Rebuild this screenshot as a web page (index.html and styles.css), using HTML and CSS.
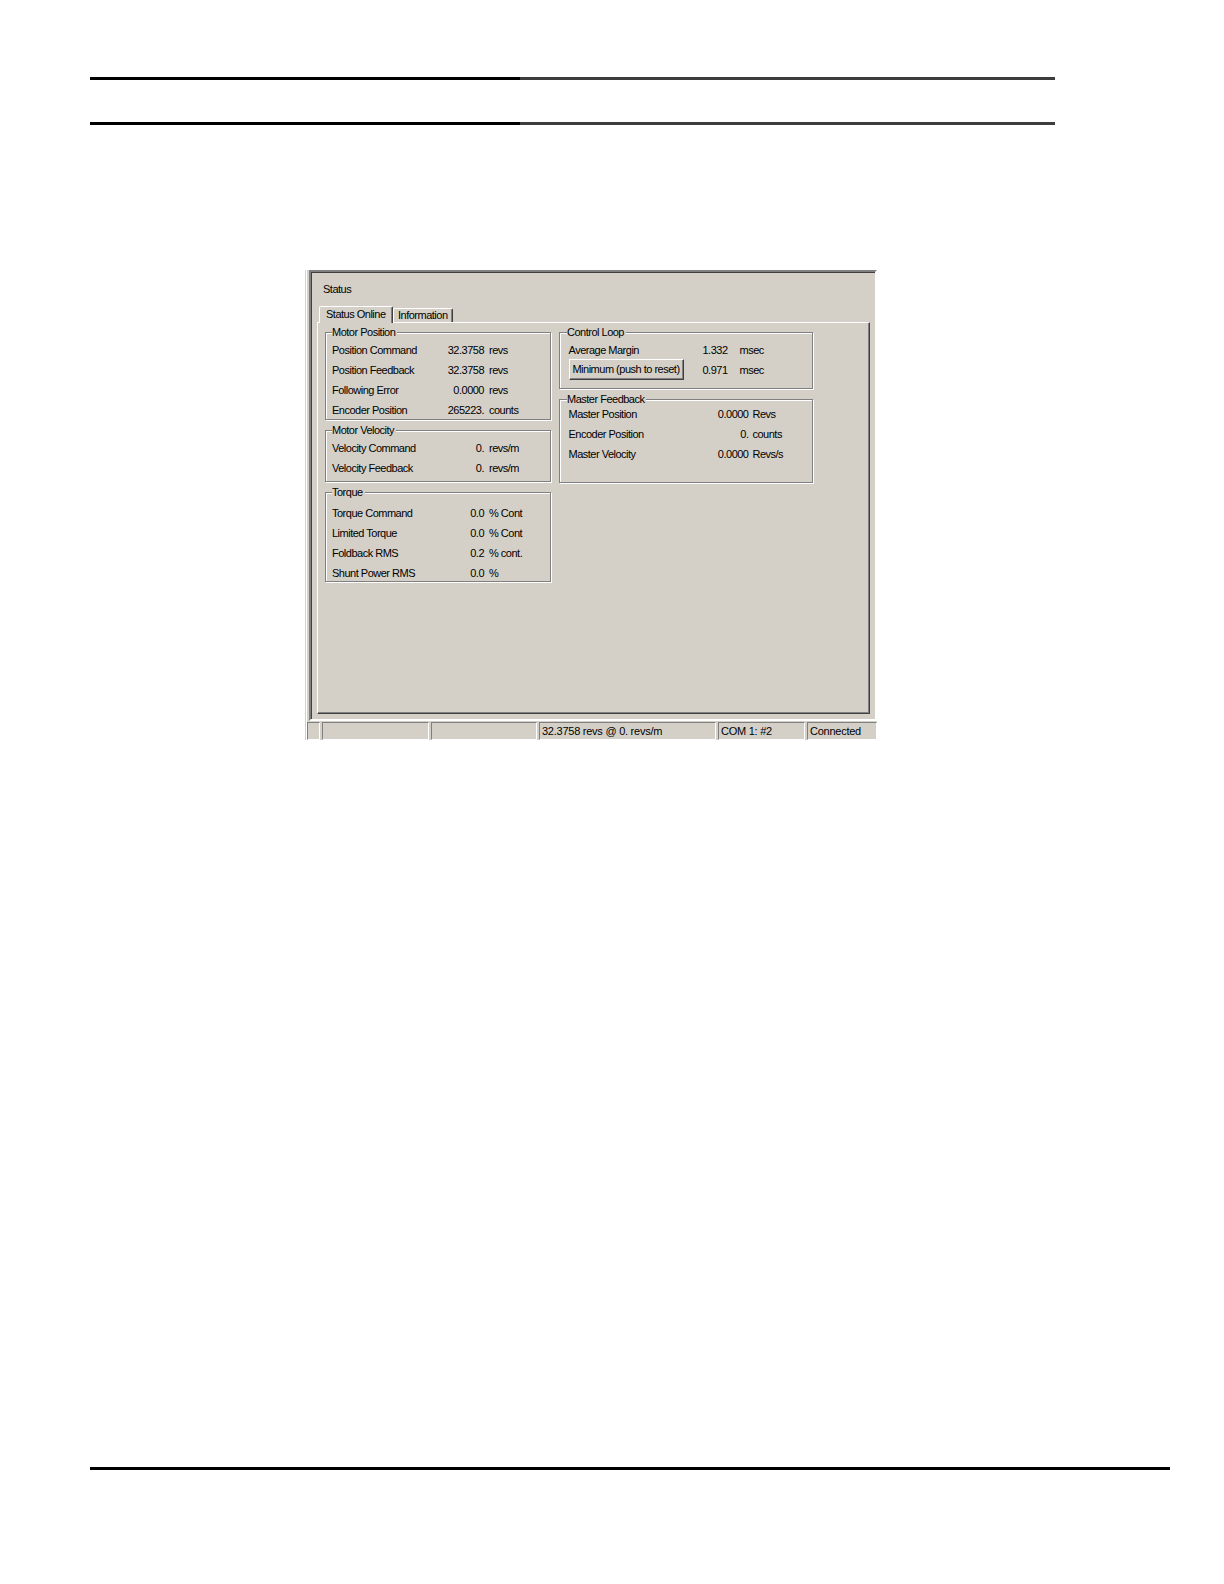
FILE: index.html
```html
<!DOCTYPE html>
<html>
<head>
<meta charset="utf-8">
<title>Status</title>
<link rel="stylesheet" href="styles.css">
</head>
<body>
<div class="page">
  <div class="rule rule-top"></div>
  <div class="rule rule-top rule-second"></div>

  <div class="win">
    <div class="wframe">
      <div class="client">
        <div class="title">Status</div>
        <div class="tabs">
          <div class="tab tab-active">Status Online</div>
          <div class="tab tab-info">Information</div>
        </div>
        <div class="panel">
          <div class="col col-left">
            <fieldset class="group g-mp">
              <legend>Motor Position</legend>
              <div class="row"><span>Position Command</span><span class="val">32.3758</span><span class="unit">revs</span></div>
              <div class="row"><span>Position Feedback</span><span class="val">32.3758</span><span class="unit">revs</span></div>
              <div class="row"><span>Following Error</span><span class="val">0.0000</span><span class="unit">revs</span></div>
              <div class="row"><span>Encoder Position</span><span class="val">265223.</span><span class="unit">counts</span></div>
            </fieldset>
            <fieldset class="group g-mv">
              <legend>Motor Velocity</legend>
              <div class="row"><span>Velocity Command</span><span class="val">0.</span><span class="unit">revs/m</span></div>
              <div class="row"><span>Velocity Feedback</span><span class="val">0.</span><span class="unit">revs/m</span></div>
            </fieldset>
            <fieldset class="group g-t">
              <legend>Torque</legend>
              <div class="row"><span>Torque Command</span><span class="val">0.0</span><span class="unit">% Cont</span></div>
              <div class="row"><span>Limited Torque</span><span class="val">0.0</span><span class="unit">% Cont</span></div>
              <div class="row"><span>Foldback RMS</span><span class="val">0.2</span><span class="unit">% cont.</span></div>
              <div class="row"><span>Shunt Power RMS</span><span class="val">0.0</span><span class="unit">%</span></div>
            </fieldset>
          </div>
          <div class="col col-right">
            <fieldset class="group g-cl">
              <legend>Control Loop</legend>
              <div class="row row-cl r1"><span>Average Margin</span><span>1.332</span><span>msec</span></div>
              <div class="row row-cl r2"><span class="btn-cell"><button class="btn" type="button">Minimum (push to reset)</button></span><span class="v2">0.971</span><span class="v2">msec</span></div>
            </fieldset>
            <fieldset class="group g-mf">
              <legend>Master Feedback</legend>
              <div class="row row-mf"><span>Master Position</span><span class="val">0.0000</span><span class="unit-mf">Revs</span></div>
              <div class="row row-mf"><span>Encoder Position</span><span class="val">0.</span><span class="unit-mf">counts</span></div>
              <div class="row row-mf"><span>Master Velocity</span><span class="val">0.0000</span><span class="unit-mf">Revs/s</span></div>
            </fieldset>
          </div>
        </div>
      </div>
      <div class="statusbar">
        <div class="sp sp1"></div>
        <div class="sp sp2"></div>
        <div class="sp sp3"></div>
        <div class="sp sp4">32.3758 revs @ 0. revs/m</div>
        <div class="sp sp5">COM 1: #2</div>
        <div class="sp sp6">Connected</div>
      </div>
    </div>
  </div>

  <div class="rule rule-bottom"></div>
</div>
</body>
</html>
```

FILE: styles.css
```css
* { box-sizing: border-box; }

html, body {
  margin: 0;
  padding: 0;
  background: #fff;
}

body {
  width: 1224px;
  height: 1584px;
  overflow: hidden;
  font-family: "Liberation Sans", Arial, sans-serif;
}

.page {
  padding-top: 77px;
  padding-left: 90px;
}

.rule { height: 3px; }

.rule-top {
  width: 965px;
  background: linear-gradient(to right, #000 0, #000 430px, #3d3d3d 430px, #3d3d3d 100%);
}

.rule-second { margin-top: 42px; }

.rule-bottom {
  width: 1080px;
  margin-top: 727px;
  background: #000;
}

/* ---------- window ---------- */
.win {
  margin-top: 145px;
  margin-left: 215px;
  width: 572px;
  height: 470px;
  padding-left: 1px;
  background: #d4d0c8;
  font-family: "Liberation Sans", Arial, sans-serif;
  font-size: 11px;
  letter-spacing: -0.5px;
  line-height: 14px;
  color: #000;
}

.wframe {
  height: 100%;
  border-left: 1px solid #fff;
}

.client {
  margin-left: 2px;
  height: 451px;
  border: 2px solid;
  border-color: #808080 #fff #fff #808080;
  box-shadow: inset 1px 1px 0 #404040, inset -1px -1px 0 #d4d0c8;
  padding: 10px 5px 0 6px;
  display: flex;
  flex-direction: column;
}

.title {
  height: 14px;
  line-height: 14px;
  padding-left: 6px;
}

/* ---------- tabs ---------- */
.tabs {
  display: flex;
  align-items: flex-end;
  height: 16px;
  margin-top: 10px;
  padding-left: 2px;
}

.tab {
  border: 1px solid #fff;
  border-right-color: #404040;
  border-bottom: 0;
  border-radius: 2px 2px 0 0;
  box-shadow: inset -1px 0 0 #808080;
  background: #d4d0c8;
  white-space: nowrap;
}

.tab-active {
  width: 74px;
  height: 17px;
  margin-bottom: -1px;
  padding-left: 6px;
  line-height: 15px;
  position: relative;
  z-index: 1;
}

.tab-info {
  width: 60px;
  height: 14px;
  padding-left: 4px;
  line-height: 13px;
}

/* ---------- tab panel ---------- */
.panel {
  height: 392px;
  border: 1px solid;
  border-color: #fff #404040 #404040 #fff;
  box-shadow: inset -1px -1px 0 #808080;
  padding: 0 0 0 7px;
  display: flex;
  align-items: flex-start;
  gap: 8px;
}

.col {
  display: flex;
  flex-direction: column;
}

.col-left { width: 226px; }
.col-right { width: 254px; }

.group {
  margin: 0;
  min-width: 0;
  padding: 0 0 0 6px;
  border: 1px solid #808080;
  box-shadow: 1px 1px 0 #fff, inset 1px 1px 0 #fff;
}

.group legend {
  padding: 0 2px 0 0;
  height: 12px;
  line-height: 12px;
  background: #d4d0c8;
  white-space: nowrap;
}

.g-mp { margin-top: 3px; padding-top: 1px; }
.g-mv { margin-top: 4px; padding-top: 2px; padding-bottom: 3px; }
.g-t  { margin-top: 4px; padding-top: 3px; }
.g-cl { margin-top: 3px; padding-top: 2px; padding-bottom: 8px; padding-left: 7px; }
.g-mf { margin-top: 4px; padding-top: 0; padding-bottom: 17px; padding-left: 7px; }

.row {
  display: grid;
  height: 20px;
  line-height: 20px;
  white-space: nowrap;
}

.col-left .row { grid-template-columns: 107px 45px auto; }

.g-mp .row { line-height: 22px; }
.g-t .row { line-height: 24px; }
.g-mf .row { line-height: 18px; }

.val { text-align: right; }
.unit { padding-left: 5px; }

.col-right .row { padding-left: 1.5px; }

.row-cl { grid-template-columns: 134px 37px auto; }
.row-cl.r1 { height: 19px; line-height: 20px; }
.row-cl.r2 { height: 21px; line-height: 21px; }
.v2 { line-height: 23px; }

.btn-cell { display: flex; align-items: center; height: 21px; }

.btn {
  font: inherit;
  letter-spacing: inherit;
  color: inherit;
  width: 115px;
  height: 21px;
  margin: 0;
  padding: 0;
  background: #d4d0c8;
  border: 1px solid;
  border-color: #fff #404040 #404040 #fff;
  box-shadow: inset -1px -1px 0 #808080;
  line-height: 17px;
  text-align: center;
  white-space: nowrap;
}

.row-mf { grid-template-columns: 120px 60px auto; }
.unit-mf { padding-left: 4px; }

/* ---------- status bar ---------- */
.statusbar {
  display: flex;
  gap: 2px;
  height: 19px;
  padding-top: 1px;
  letter-spacing: -0.25px;
}

.sp {
  height: 18px;
  border: 1px solid;
  border-color: #808080 #fff #fff #808080;
  padding-left: 2px;
  line-height: 16px;
  white-space: nowrap;
  overflow: hidden;
}

.sp1 { width: 13px; }
.sp2 { width: 107px; }
.sp3 { width: 106px; }
.sp4 { width: 177px; }
.sp5 { width: 87px; }
.sp6 { flex: 1; }
```
